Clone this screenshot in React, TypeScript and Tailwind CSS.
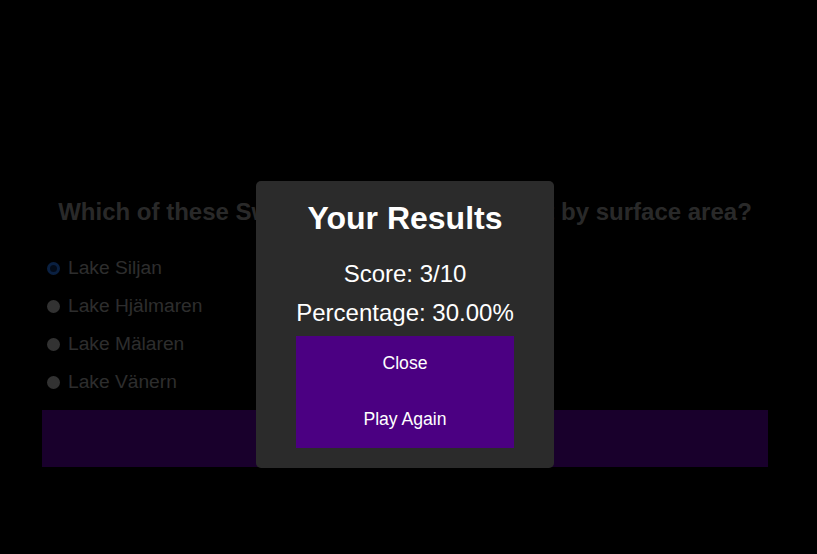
const options = ["Lake Siljan", "Lake Hjälmaren", "Lake Mälaren", "Lake Vänern"];

export default function App() {
  return (
    <div className="relative min-h-[554px] bg-black font-['Liberation_Sans',Arial,sans-serif]">
      <div className="w-[726px] ml-[42px] pt-[198px]">
        <h2 className="text-center text-[24px] font-bold leading-[28px] text-[#7a7a7a]">
          Which of these Swedish lakes is the largest by surface area?
        </h2>
        <div className="mt-[31px] flex flex-col gap-[16px] pl-[5px]">
          {options.map((o, i) => (
            <label key={o} className="flex items-center gap-[8px] h-[22px] text-[19.2px] text-[#858585]">
              <span
                className={
                  i === 0
                    ? "w-[13px] h-[13px] rounded-full border-[3px] border-[#1f5fbf] bg-[#0a2048]"
                    : "w-[13px] h-[13px] rounded-full bg-[#939393]"
                }
              />
              {o}
            </label>
          ))}
        </div>
        <button className="mt-[17px] w-full h-[57px] bg-[#4b0082]" />
      </div>

      {/* results overlay */}
      <div className="absolute inset-0 bg-black/[0.66]">
        <div className="absolute left-[256px] top-[181px] w-[298px] rounded-[5px] bg-[#2b2b2b] px-[40px] pt-[19px] pb-[20px] text-white text-center">
          <h2 className="text-[32px] font-bold leading-[36px]">Your Results</h2>
          <p className="mt-[24px] text-[24px] leading-[28px]">Score: 3/10</p>
          <p className="mt-[11px] text-[24px] leading-[28px]">Percentage: 30.00%</p>
          <div className="mt-[9px] flex flex-col bg-[#4b0082]">
            <button className="h-[56px] pb-[2px] text-[17.6px] text-white">Close</button>
            <button className="h-[56px] pb-[2px] text-[17.6px] text-white">Play Again</button>
          </div>
        </div>
      </div>
    </div>
  );
}
